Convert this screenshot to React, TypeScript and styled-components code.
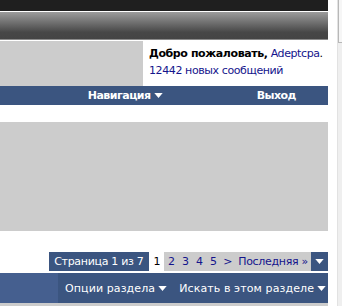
import styled, { createGlobalStyle } from "styled-components"

const GlobalStyle = createGlobalStyle`
    html, body {
        margin: 0;
        padding: 0;
        background: #fff;
        font-family: "DejaVu Sans", Verdana, sans-serif;
    }
`

const Caret = ({ size = 9 }: { size?: number }) => (
    <svg width={size} height={Math.round(size * 0.6)} viewBox="0 0 10 6">
        <path d="M0 0 H10 L5 6 Z" fill="#fff" />
    </svg>
)

const pages = ["2", "3", "4", "5", ">"]

export default function App() {
    return (
        <>
            <GlobalStyle />
            <Frame>
                <Page>
                    <TopBar />
                    <Header />
                    <Welcome>
                        <Banner />
                        <Greeting>
                            <div>
                                <b>Добро пожаловать,</b> <Link>Adeptcpa</Link>.
                            </div>
                            <Link>12442 новых сообщений</Link>
                        </Greeting>
                    </Welcome>
                    <NavBar>
                        <NavItem>
                            Навигация <Caret />
                        </NavItem>
                        <NavItem>Выход</NavItem>
                    </NavBar>
                    <ContentBox />
                    <Pagination>
                        <PageLabel>Страница 1 из 7</PageLabel>
                        <CurrentPage>1</CurrentPage>
                        <PageList>
                            {pages.map((p) => (
                                <PageLink key={p}>{p}</PageLink>
                            ))}
                            <PageLink>Последняя »</PageLink>
                        </PageList>
                        <PageMenu>
                            <Caret />
                        </PageMenu>
                    </Pagination>
                    <ThreadBar>
                        <ThreadBarLead />
                        <ThreadControls>
                            <Control>
                                Опции раздела <Caret />
                            </Control>
                            <Control>
                                Искать в этом разделе <Caret />
                            </Control>
                        </ThreadControls>
                    </ThreadBar>
                    <Footer />
                </Page>
                <Scrollbar>
                    <Thumb />
                </Scrollbar>
            </Frame>
        </>
    )
}

const Frame = styled.div`
    display: flex;
    height: 306px;
    overflow: hidden;
`

const Page = styled.div`
    width: 328px;
    flex-shrink: 0;
    margin-right: 9px;
    display: flex;
    flex-direction: column;
`

const TopBar = styled.div`
    height: 11px;
    background: #1f1f1f;
    border-bottom: 1px solid #fff;
`

const Header = styled.div`
    height: 27px;
    background: linear-gradient(#9c9c9c, #474747 75%, #444);
    border-bottom: 1px solid #8a8a8a;
    margin-bottom: 1px;
`

const Welcome = styled.div`
    display: flex;
    height: 45px;
`

const Banner = styled.div`
    width: 143px;
    flex-shrink: 0;
    background: #cccccc;
`

const Greeting = styled.div`
    flex: 1;
    min-width: 0;
    padding: 4px 0 0 6px;
    font-size: 11px;
    line-height: 17px;
    letter-spacing: -0.4px;
    color: #000;
    white-space: nowrap;
`

const Link = styled.span`
    color: #14148c;
`

const NavBar = styled.div`
    height: 19px;
    background: #3b5580;
    display: flex;
    justify-content: flex-end;
    align-items: center;
    gap: 94px;
    padding-right: 32px;
`

const NavItem = styled.div`
    display: flex;
    align-items: center;
    gap: 3px;
    color: #fff;
    font-weight: bold;
    font-size: 11px;
    letter-spacing: -0.5px;
`

const ContentBox = styled.div`
    height: 109px;
    margin-top: 17px;
    background: #cccccc;
`

const Pagination = styled.div`
    display: flex;
    justify-content: flex-end;
    height: 19px;
    margin-top: 21px;
    font-size: 11px;
    line-height: 19px;
    letter-spacing: -0.3px;
    white-space: nowrap;
`

const PageLabel = styled.div`
    background: #3b5580;
    color: #fff;
    padding: 0 5px;
`

const CurrentPage = styled.div`
    color: #000;
    padding: 0 4px 0 5px;
`

const PageList = styled.div`
    display: flex;
    background: #cccccc;
`

const PageLink = styled.span`
    color: #14148c;
    padding: 0 3px;
    min-width: 8px;
    text-align: center;
`

const PageMenu = styled.div`
    width: 17px;
    background: #3b5580;
    display: flex;
    align-items: center;
    justify-content: center;
`

const ThreadBar = styled.div`
    display: flex;
    height: 30px;
    margin-top: 2px;
    background: #3b5580;
`

const ThreadBarLead = styled.div`
    width: 58px;
    flex-shrink: 0;
    background: #455f8f;
`

const ThreadControls = styled.div`
    flex: 1;
    display: flex;
    justify-content: flex-end;
    align-items: center;
    gap: 12px;
    padding-right: 2px;
    white-space: nowrap;
`

const Control = styled.div`
    display: flex;
    align-items: center;
    gap: 3px;
    color: #fff;
    font-size: 11px;
    letter-spacing: 0.1px;
`

const Footer = styled.div`
    flex: 1;
    background: #cccccc;
`

const Scrollbar = styled.div`
    width: 5px;
    background: #efefef;
    border-left: 1px solid #e2e2e2;
`

const Thumb = styled.div`
    height: 42px;
    border-left: 1px solid #b8b8b8;
    border-bottom: 1px solid #b8b8b8;
    background: #f6f6f6;
`
